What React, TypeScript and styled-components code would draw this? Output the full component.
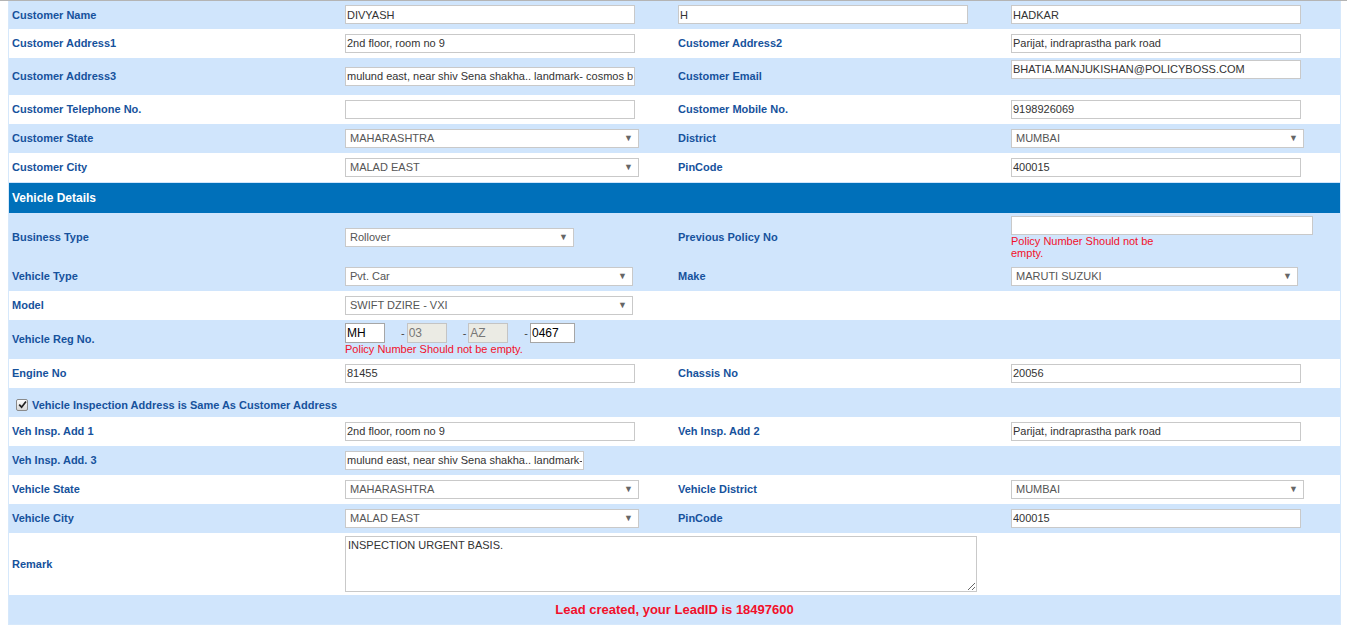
import React from 'react';
import styled, { createGlobalStyle, css } from 'styled-components';

const GlobalStyle = createGlobalStyle`
  html, body { margin: 0; padding: 0; background: #fff; }
  body { font-family: "Liberation Sans", Arial, sans-serif; }
`;

const TopRule = styled.div`
  height: 1px;
  background: #b4b4b4;
`;

const Form = styled.div`
  margin-left: 8px;
  width: 1333px;
  box-sizing: border-box;
  border-left: 1px solid #d6e8fb;
  border-right: 1px solid #d6e8fb;
  border-bottom: 1px solid #d6e8fb;
  background: #fff;
`;

const Row = styled.div<{ $blue?: boolean; $h?: number }>`
  display: grid;
  grid-template-columns: 333px 333px 333px 1fr;
  min-height: ${(p) => p.$h ?? 29}px;
  background: ${(p) => (p.$blue ? '#d0e5fc' : '#fff')};
`;

const Cell = styled.div<{ $span?: number; $center?: boolean }>`
  display: flex;
  flex-direction: column;
  justify-content: center;
  align-items: ${(p) => (p.$center ? 'center' : 'flex-start')};
  padding: 0 3px 1px;
  min-width: 0;
  ${(p) =>
    p.$span &&
    css`
      grid-column: span ${p.$span};
    `}
`;

const Label = styled.span`
  font: bold 11px "Liberation Sans", Arial, sans-serif;
  color: #16529c;
`;

const SectionHeader = styled.div`
  height: 30px;
  border-top: 1px solid #d0e5fc;
  background: #0070ba;
  display: flex;
  align-items: center;
  padding-left: 3px;
  font: bold 12px "Liberation Sans", Arial, sans-serif;
  color: #fff;
`;

const TextInput = styled.input<{ $w?: number }>`
  box-sizing: border-box;
  width: ${(p) => p.$w ?? 290}px;
  height: 19px;
  margin: 0;
  padding: 0 1px;
  border: 1px solid #c9c9c9;
  background: #fff;
  font: 11px "Liberation Sans", Arial, sans-serif;
  color: #333;
  outline: none;
`;

const SelectBox = styled.div<{ $w: number }>`
  box-sizing: border-box;
  width: ${(p) => p.$w}px;
  height: 19px;
  border: 1px solid #c9c9c9;
  background: #fff;
  display: flex;
  align-items: center;
  justify-content: space-between;
  padding: 0 5px 0 4px;
  font: 11px "Liberation Sans", Arial, sans-serif;
  color: #555;
`;

const Arrow = styled.span`
  font-size: 9px;
  color: #666;
  line-height: 1;
`;

const ErrorText = styled.span<{ $max?: number }>`
  display: block;
  font: 11px "Liberation Sans", Arial, sans-serif;
  line-height: 12px;
  color: #f2102a;
  max-width: ${(p) => (p.$max ? `${p.$max}px` : 'none')};
`;

const Spacer = styled.div`
  height: 14px;
`;

const RegLine = styled.div`
  display: flex;
  align-items: center;
`;

const RegInput = styled.input<{ $w: number; $disabled?: boolean }>`
  box-sizing: border-box;
  width: ${(p) => p.$w}px;
  height: 20px;
  margin: 0;
  padding: 0 1px;
  border: 1px solid ${(p) => (p.$disabled ? '#c4c4c4' : '#a6a6a6')};
  background: ${(p) => (p.$disabled ? '#ebebe4' : '#fff')};
  color: ${(p) => (p.$disabled ? '#777' : '#000')};
  font: 12px "Liberation Sans", Arial, sans-serif;
  outline: none;
`;

const Dash = styled.span`
  margin: 0 2px 0 16px;
  font: 11px "Liberation Sans", Arial, sans-serif;
  color: #444;
`;

const CheckLine = styled.label`
  display: flex;
  align-items: center;
  padding: 5px 0 0 4px;
`;

const CheckBox = styled.span`
  box-sizing: border-box;
  width: 12px;
  height: 12px;
  margin-right: 4px;
  border: 1px solid #8a8a8a;
  border-radius: 2px;
  background: linear-gradient(#fdfdfd, #d8d8d8);
  display: flex;
  align-items: center;
  justify-content: center;
`;

const RemarkArea = styled.textarea`
  box-sizing: border-box;
  width: 632px;
  height: 56px;
  margin: 0;
  padding: 2px;
  border: 1px solid #c9c9c9;
  font: 11px "Liberation Sans", Arial, sans-serif;
  color: #333;
  resize: both;
  outline: none;
`;

const LeadMessage = styled.span`
  font: bold 13px "Liberation Sans", Arial, sans-serif;
  color: #f2102a;
`;

const Input = ({ v, w }: { v?: string; w?: number }) => (
  <TextInput $w={w} defaultValue={v ?? ''} readOnly />
);

const Select = ({ v, w }: { v: string; w: number }) => (
  <SelectBox $w={w}>
    <span>{v}</span>
    <Arrow>▼</Arrow>
  </SelectBox>
);

export default function App() {
  return (
    <>
      <GlobalStyle />
      <TopRule />
      <Form>
        <Row $blue $h={28}>
          <Cell><Label>Customer Name</Label></Cell>
          <Cell><Input v="DIVYASH" /></Cell>
          <Cell><Input v="H" /></Cell>
          <Cell><Input v="HADKAR" /></Cell>
        </Row>
        <Row>
          <Cell><Label>Customer Address1</Label></Cell>
          <Cell><Input v="2nd floor, room no 9" /></Cell>
          <Cell><Label>Customer Address2</Label></Cell>
          <Cell><Input v="Parijat, indraprastha park road" /></Cell>
        </Row>
        <Row $blue $h={37}>
          <Cell><Label>Customer Address3</Label></Cell>
          <Cell><Input v="mulund east, near shiv Sena shakha.. landmark- cosmos bank" /></Cell>
          <Cell><Label>Customer Email</Label></Cell>
          <Cell>
            <Input v="BHATIA.MANJUKISHAN@POLICYBOSS.COM" />
            <Spacer />
          </Cell>
        </Row>
        <Row>
          <Cell><Label>Customer Telephone No.</Label></Cell>
          <Cell><Input v="" /></Cell>
          <Cell><Label>Customer Mobile No.</Label></Cell>
          <Cell><Input v="9198926069" /></Cell>
        </Row>
        <Row $blue>
          <Cell><Label>Customer State</Label></Cell>
          <Cell><Select v="MAHARASHTRA" w={294} /></Cell>
          <Cell><Label>District</Label></Cell>
          <Cell><Select v="MUMBAI" w={293} /></Cell>
        </Row>
        <Row>
          <Cell><Label>Customer City</Label></Cell>
          <Cell><Select v="MALAD EAST" w={294} /></Cell>
          <Cell><Label>PinCode</Label></Cell>
          <Cell><Input v="400015" /></Cell>
        </Row>

        <SectionHeader>Vehicle Details</SectionHeader>

        <Row $blue $h={49}>
          <Cell><Label>Business Type</Label></Cell>
          <Cell><Select v="Rollover" w={229} /></Cell>
          <Cell><Label>Previous Policy No</Label></Cell>
          <Cell>
            <Input v="" w={302} />
            <ErrorText $max={160}>Policy Number Should not be empty.</ErrorText>
          </Cell>
        </Row>
        <Row $blue>
          <Cell><Label>Vehicle Type</Label></Cell>
          <Cell><Select v="Pvt. Car" w={288} /></Cell>
          <Cell><Label>Make</Label></Cell>
          <Cell><Select v="MARUTI SUZUKI" w={287} /></Cell>
        </Row>
        <Row>
          <Cell><Label>Model</Label></Cell>
          <Cell><Select v="SWIFT DZIRE - VXI" w={288} /></Cell>
          <Cell />
          <Cell />
        </Row>
        <Row $blue $h={39}>
          <Cell><Label>Vehicle Reg No.</Label></Cell>
          <Cell>
            <RegLine>
              <RegInput $w={40} defaultValue="MH" readOnly />
              <Dash>-</Dash>
              <RegInput $w={40} $disabled defaultValue="03" readOnly />
              <Dash>-</Dash>
              <RegInput $w={40} $disabled defaultValue="AZ" readOnly />
              <Dash>-</Dash>
              <RegInput $w={45} defaultValue="0467" readOnly />
            </RegLine>
            <ErrorText>Policy Number Should not be empty.</ErrorText>
          </Cell>
          <Cell />
          <Cell />
        </Row>
        <Row>
          <Cell><Label>Engine No</Label></Cell>
          <Cell><Input v="81455" /></Cell>
          <Cell><Label>Chassis No</Label></Cell>
          <Cell><Input v="20056" /></Cell>
        </Row>
        <Row $blue>
          <Cell $span={4}>
            <CheckLine>
              <CheckBox>
                <svg width="9" height="9" viewBox="0 0 9 9">
                  <path d="M1.2 4.6 L3.6 7.2 L8 1.4" fill="none" stroke="#222" strokeWidth="1.7" />
                </svg>
              </CheckBox>
              <Label>Vehicle Inspection Address is Same As Customer Address</Label>
            </CheckLine>
          </Cell>
        </Row>
        <Row>
          <Cell><Label>Veh Insp. Add 1</Label></Cell>
          <Cell><Input v="2nd floor, room no 9" /></Cell>
          <Cell><Label>Veh Insp. Add 2</Label></Cell>
          <Cell><Input v="Parijat, indraprastha park road" /></Cell>
        </Row>
        <Row $blue>
          <Cell><Label>Veh Insp. Add. 3</Label></Cell>
          <Cell><Input v="mulund east, near shiv Sena shakha.. landmark- cosmos bank" w={239} /></Cell>
          <Cell />
          <Cell />
        </Row>
        <Row>
          <Cell><Label>Vehicle State</Label></Cell>
          <Cell><Select v="MAHARASHTRA" w={294} /></Cell>
          <Cell><Label>Vehicle District</Label></Cell>
          <Cell><Select v="MUMBAI" w={293} /></Cell>
        </Row>
        <Row $blue>
          <Cell><Label>Vehicle City</Label></Cell>
          <Cell><Select v="MALAD EAST" w={294} /></Cell>
          <Cell><Label>PinCode</Label></Cell>
          <Cell><Input v="400015" /></Cell>
        </Row>
        <Row $h={62}>
          <Cell><Label>Remark</Label></Cell>
          <Cell $span={3}>
            <RemarkArea defaultValue="INSPECTION URGENT BASIS." readOnly />
          </Cell>
        </Row>
        <Row $blue>
          <Cell $span={4} $center>
            <LeadMessage>Lead created, your LeadID is 18497600</LeadMessage>
          </Cell>
        </Row>
      </Form>
    </>
  );
}
